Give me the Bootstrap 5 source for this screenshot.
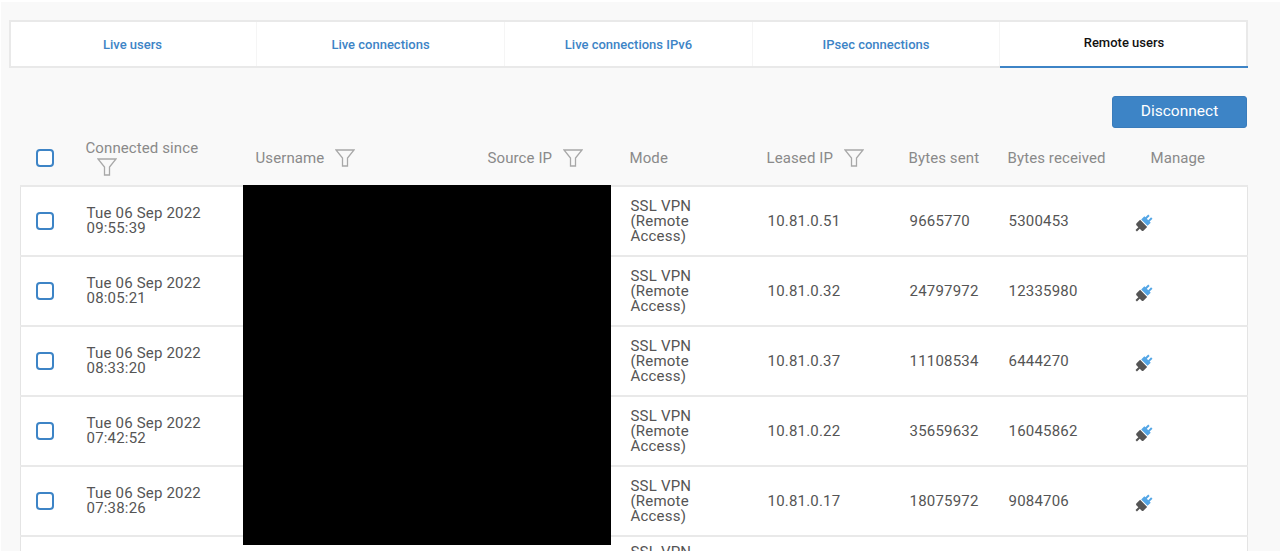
<!DOCTYPE html>
<html lang="en">
<head>
<meta charset="utf-8">
<title>Remote users</title>
<link href="https://cdn.jsdelivr.net/npm/bootstrap@5.3.0/dist/css/bootstrap.min.css" rel="stylesheet">
<style>
html,body{height:551px;overflow:hidden}
body{background:#f9f9f9;font-family:Roboto,"Liberation Sans",sans-serif;color:#555;font-size:15px;border-top:2px solid #fff;box-shadow:inset 1px 0 #fff}
.page-wrap{position:relative;padding:18px 32px 0 9px}
.tabbar{background:#fff;border:2px solid #e9e9e9;height:48px;flex-wrap:nowrap}
.tabbar .nav-item{width:248px;flex:0 0 auto;border-right:1px solid #f5f5f5}
.tabbar .nav-item:first-child{margin-left:-2px}
.tabbar .nav-item:nth-child(4){width:247px}
.tabbar .nav-item:last-child{border-right:0;flex:1 1 auto;margin-right:-2px}
.tabbar .nav-link{height:44px;padding:1px 0 0;display:flex;align-items:center;justify-content:center;color:#3d84c6;font-size:13px;font-weight:500}
.tabbar .nav-link.active{color:#111;height:46px;padding:0 0 3px;border-bottom:2px solid #3d84c6}
.action-row{padding:28px 1px 0 0;height:62px}
.disc-btn{width:135px;height:32px;padding:0;background:#3d84c6;border:1px solid #3a7cbb;border-radius:3px;color:#fff;font-size:15.5px;line-height:1}
.sess-wrap{margin-left:11px;width:1228px;position:relative}
.sess-table{table-layout:fixed;width:1228px;margin:0;border-collapse:collapse;--bs-table-bg:transparent}
.sess-table th{font-weight:400;color:#8a8a8a;font-size:15px;letter-spacing:.1px;line-height:18px;height:56px;padding:0;vertical-align:middle;border:0;background:transparent}
.sess-table th:nth-child(3){padding-left:1px}
.sess-table th:last-child{padding-left:17px}
.sess-table td{background:#fff;height:70px;padding:0 0 0 1px;vertical-align:middle;line-height:15px;letter-spacing:.2px;color:#555;border:0;border-top:2px solid #e9e9e9}
.sess-table tr td:first-child{border-left:1px solid #e4e4e4;padding:0}
.sess-table tr td:last-child{border-right:1px solid #e4e4e4}
.tick{width:18px;height:18px;margin:0 0 0 15px;display:block;border:2px solid #3d84c6;border-radius:4px;background:#fff}
.funnel{width:20px;height:18px;vertical-align:-4px;margin-left:11px}
.funnel-below{display:block;margin:1px 0 0 11px;height:18px}
.mask{position:absolute;left:223px;top:55px;width:368px;height:360px;background:#000}
.plug{width:18px;height:18px;display:block;margin-top:4px}
</style>
</head>
<body>
<div class="page-wrap">
  <ul class="nav tabbar">
    <li class="nav-item"><a class="nav-link" href="#">Live users</a></li>
    <li class="nav-item"><a class="nav-link" href="#">Live connections</a></li>
    <li class="nav-item"><a class="nav-link" href="#">Live connections IPv6</a></li>
    <li class="nav-item"><a class="nav-link" href="#">IPsec connections</a></li>
    <li class="nav-item"><a class="nav-link active" href="#">Remote users</a></li>
  </ul>
  <div class="action-row d-flex justify-content-end">
    <button type="button" class="btn disc-btn">Disconnect</button>
  </div>
  <div class="sess-wrap">
    <svg width="0" height="0" class="position-absolute">
      <defs>
        <symbol id="fn" viewBox="0 0 20 18"><path d="M1 1h18l-6.500 8v8h-5V9z" fill="none" stroke="#a8a8a8" stroke-width="1.300"/></symbol>
        <symbol id="pl" viewBox="0 0 18 18">
          <g transform="rotate(-45 9 9)">
            <path d="M-2 8h4V5.500q0-1.500 1.500-1.500H8.500v10H3.500Q2 14 2 12.500V10h-4z" fill="#555"/>
            <path d="M9.500 4.500h4.500v1.500h4v2h-4v2h4v2h-4v1.500H9.500z" fill="#53a6e6"/>
          </g>
        </symbol>
      </defs>
    </svg>
    <table class="table sess-table">
      <colgroup><col style="width:65px"><col style="width:169px"><col style="width:233px"><col style="width:142px"><col style="width:137px"><col style="width:142px"><col style="width:99px"><col style="width:126px"><col></colgroup>
      <thead>
        <tr>
          <th><span class="tick"></span></th>
          <th>Connected since<svg class="funnel funnel-below"><use href="#fn"/></svg></th>
          <th>Username<svg class="funnel"><use href="#fn"/></svg></th>
          <th>Source IP<svg class="funnel"><use href="#fn"/></svg></th>
          <th>Mode</th>
          <th>Leased IP<svg class="funnel"><use href="#fn"/></svg></th>
          <th>Bytes sent</th>
          <th>Bytes received</th>
          <th>Manage</th>
        </tr>
      </thead>
      <tbody>
        <tr><td><span class="tick"></span></td><td>Tue 06 Sep 2022<br>09:55:39</td><td></td><td></td><td>SSL VPN<br>(Remote<br>Access)</td><td>10.81.0.51</td><td>9665770</td><td>5300453</td><td><svg class="plug"><use href="#pl"/></svg></td></tr>
        <tr><td><span class="tick"></span></td><td>Tue 06 Sep 2022<br>08:05:21</td><td></td><td></td><td>SSL VPN<br>(Remote<br>Access)</td><td>10.81.0.32</td><td>24797972</td><td>12335980</td><td><svg class="plug"><use href="#pl"/></svg></td></tr>
        <tr><td><span class="tick"></span></td><td>Tue 06 Sep 2022<br>08:33:20</td><td></td><td></td><td>SSL VPN<br>(Remote<br>Access)</td><td>10.81.0.37</td><td>11108534</td><td>6444270</td><td><svg class="plug"><use href="#pl"/></svg></td></tr>
        <tr><td><span class="tick"></span></td><td>Tue 06 Sep 2022<br>07:42:52</td><td></td><td></td><td>SSL VPN<br>(Remote<br>Access)</td><td>10.81.0.22</td><td>35659632</td><td>16045862</td><td><svg class="plug"><use href="#pl"/></svg></td></tr>
        <tr><td><span class="tick"></span></td><td>Tue 06 Sep 2022<br>07:38:26</td><td></td><td></td><td>SSL VPN<br>(Remote<br>Access)</td><td>10.81.0.17</td><td>18075972</td><td>9084706</td><td><svg class="plug"><use href="#pl"/></svg></td></tr>
        <tr><td colspan="4"></td><td class="align-top pt-2">SSL VPN</td><td colspan="4"></td></tr>
      </tbody>
    </table>
    <div class="mask"></div>
  </div>
</div>
<script src="https://cdn.jsdelivr.net/npm/bootstrap@5.3.0/dist/js/bootstrap.bundle.min.js"></script>
</body>
</html>
